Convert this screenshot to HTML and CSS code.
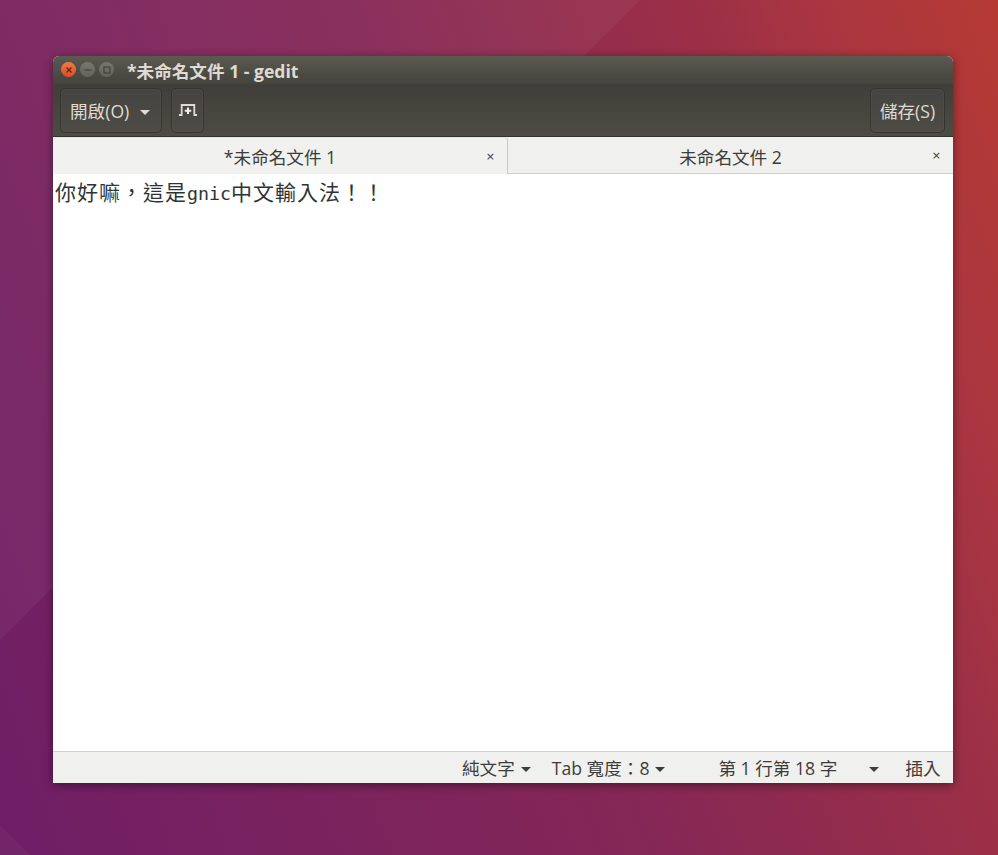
FILE: index.html
```html
<!DOCTYPE html>
<html lang="zh-Hant">
<head>
<meta charset="utf-8">
<title>gedit</title>
<link rel="stylesheet" href="styles.css">
</head>
<body>
<div class="desktop">
  <svg class="facets" width="998" height="855" viewBox="0 0 998 855" aria-hidden="true">
    <polygon points="0,0 640,0 0,640" fill="#ffffff" opacity="0.045"/>
    <polygon points="0,825 30,855 0,855" fill="#ffffff" opacity="0.03"/>
  </svg>
  <main class="window">
    <header class="titlebar">
      <div class="controls">
        <span class="ctl ctl-close"><svg width="8" height="8" viewBox="0 0 8 8"><path d="M1.5 1.5l5 5M6.5 1.5l-5 5" stroke="#5c2410" stroke-width="1.1"/></svg></span>
        <span class="ctl ctl-min"><svg width="8" height="8" viewBox="0 0 8 8"><path d="M0.5 4h7" stroke="#3a3a36" stroke-width="1.1"/></svg></span>
        <span class="ctl ctl-max"><svg width="8" height="8" viewBox="0 0 8 8"><rect x="1" y="1" width="6" height="6" fill="none" stroke="#3a3a36" stroke-width="1"/></svg></span>
      </div>
      <h1 class="title">*未命名文件 1 - gedit</h1>
    </header>
    <nav class="toolbar">
      <button class="tbtn tbtn-open">開啟(O)<span class="arrow arrow-light"></span></button>
      <button class="tbtn tbtn-new"><svg width="18" height="13" viewBox="0 0 18 13"><path d="M2.7 12V2H15.3V12M0 12H3.5M18 12H14.5" fill="none" stroke="#dfdbd2" stroke-width="1.8"/><path d="M9 4.5v6.5M5.8 7.7h6.4" stroke="#f2f1ef" stroke-width="2"/></svg></button>
      <span class="spacer"></span>
      <button class="tbtn tbtn-save">儲存(S)</button>
    </nav>
    <div class="tabs">
      <div class="tab tab-active"><span class="tab-label">*未命名文件 1</span><span class="tab-close">×</span></div>
      <div class="tab tab-inactive"><span class="tab-label">未命名文件 2</span><span class="tab-close">×</span></div>
    </div>
    <div class="editor"><span class="cjk">你好嘛，這是</span><span class="latin">gnic</span><span class="cjk">中文輸入法！！</span></div>
    <footer class="statusbar">
      <span class="st st-syntax">純文字<span class="arrow arrow-dark"></span></span>
      <span class="st st-tab">Tab 寬度：8<span class="arrow arrow-dark"></span></span>
      <span class="st st-pos">第 1 行第 18 字</span>
      <span class="arrow arrow-dark arrow-solo"></span>
      <span class="st st-mode">插入</span>
    </footer>
  </main>
</div>
</body>
</html>
```
FILE: styles.css
```css
* { box-sizing: border-box; }
html, body { margin: 0; padding: 0; }
body { width: 998px; height: 855px; overflow: hidden; font-family: "Open Sans", "Noto Sans CJK TC", sans-serif; }
.desktop {
  position: relative; width: 998px; height: 855px; overflow: hidden;
  background: linear-gradient(70deg, #6f1e66 0%, #852756 50%, #9b2f47 76%, #ab3640 87%, #b53a33 100%);
}
.facets { position: absolute; left: 0; top: 0; }
.window {
  position: absolute; left: 53px; top: 56px; width: 900px; height: 727px;
  display: flex; flex-direction: column;
  border-radius: 6px 6px 0 0; overflow: hidden;
  box-shadow: 0 2px 10px rgba(0,0,0,.45);
  background: #fff;
}
.titlebar {
  height: 28px; flex: none; display: flex; align-items: center; padding-left: 8px;
  background: linear-gradient(#5b5a50, #44433c);
}
.controls { display: flex; gap: 4px; margin-top: -1px; }
.ctl { width: 15px; height: 15px; border-radius: 50%; display: flex; align-items: center; justify-content: center; }
.ctl-close { background: linear-gradient(#f4784a, #d94e1e); }
.ctl-min, .ctl-max { background: linear-gradient(#78776f, #63625b); }
.title {
  margin: 1px 0 0 13px; font-size: 17.6px; font-weight: 700; color: #dfdbd2; line-height: 28px; white-space: nowrap;
  font-family: "Open Sans", "Noto Sans CJK TC", sans-serif;
}
.toolbar {
  height: 53px; flex: none; display: flex; align-items: flex-start; padding: 4px 8px 0 7px;
  background: linear-gradient(#3f3e38, #4d4c44);
  border-bottom: 1px solid #33322d;
}
.spacer { flex: 1; }
.tbtn {
  height: 45px; border: 1px solid #35342f; border-radius: 5px; background: linear-gradient(#454440, #4c4b45);
  color: #dfdbd2; font: 17.6px "Open Sans", "Noto Sans CJK TC", sans-serif; padding: 0;
  display: flex; align-items: center; box-shadow: inset 0 0 0 1px rgba(255,255,255,.03);
}
.tbtn-open { width: 102px; padding-left: 9px; }
.tbtn-new { width: 33px; margin-left: 9px; justify-content: center; padding-bottom: 2px; }
.tbtn-save { width: 75px; justify-content: center; }
.arrow { display: inline-block; width: 0; height: 0; border-left: 5px solid transparent; border-right: 5px solid transparent; }
.arrow-light { border-top: 5px solid #dfdbd2; margin-left: 11px; margin-top: 3px; }
.arrow-dark { border-top: 5px solid #3c3c3c; margin-left: 6px; vertical-align: middle; }
.tabs { height: 37px; flex: none; display: flex; background: #f0f0ee; color: #3c3c3c; font-size: 17.6px; border-bottom: 1px solid #cfcfcc; }
.tab { position: relative; display: flex; align-items: center; justify-content: center; height: 36px; }
.tab-active { width: 455px; border-right: 1px solid #c8c8c5; border-top: 1px solid #e6e6e3; height: 37px; border-radius: 0 3px 0 0; margin-bottom: -1px; z-index: 1; background: #f1f1ef; }
.tab-inactive { width: 445px; }
.tab-label { margin-top: 1px; white-space: nowrap; }
.tab-inactive .tab-label { margin-top: 3px; }
.tab-close { position: absolute; right: 12px; top: 12px; font: 11px/14px "DejaVu Sans", sans-serif; color: #3c3c3c; }
.editor { flex: 1; padding: 1px 0 0 2px; background: #fff; color: #2e3436; line-height: 32px; white-space: nowrap; height: 577px; }
.cjk { font: 21px/32px "Noto Sans CJK TC", sans-serif; letter-spacing: 1px; }
.latin { font: 18.3px/32px "DejaVu Sans Mono", monospace; }
.statusbar {
  height: 32px; flex: none; display: flex; align-items: center; background: #f0f0ee;
  border-top: 1px solid #cfcfcc; color: #3c3c3c; font-size: 17.6px; position: relative; white-space: nowrap;
}
.st { line-height: 30px; }
.st-syntax { margin-left: 409px; }
.st-tab { margin-left: 21px; }
.st-pos { margin-left: 53px; }
.arrow-solo { margin-left: 32px; margin-top: 3px; }
.st-mode { margin-left: 26px; }
```
